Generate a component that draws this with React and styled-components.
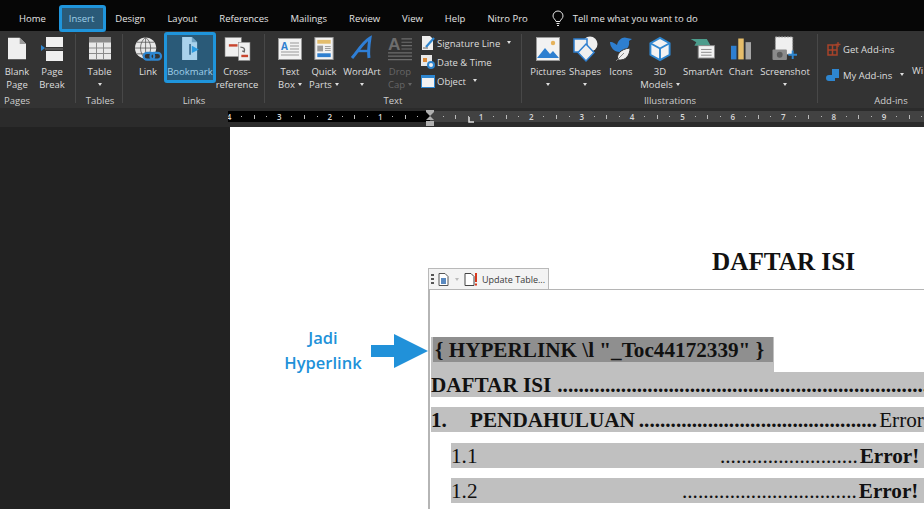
import React from "react";
import styled, { createGlobalStyle } from "styled-components";

const Global = createGlobalStyle`
  html, body { margin: 0; padding: 0; background: #222; }
  #root { width: 924px; height: 509px; overflow: hidden; }
`;

/* ---------- icons ---------- */
const Svg = ({ w = 30, h = 30, vb, children }) => (
  <svg width={w} height={h} viewBox={vb || `0 0 ${w} ${h}`} style={{ display: "block", overflow: "visible" }}>{children}</svg>
);

const BlankPageIcon = () => (
  <Svg w={18} h={23} vb="2 1 20 24">
    <path d="M2 1h13l7 7v17H2z" fill="#efefef" />
    <path d="M15 1v7h7z" fill="#9a9a9a" />
  </Svg>
);
const PageBreakIcon = () => (
  <Svg w={22} h={24} vb="0 1 22 24">
    <rect x="5" y="1" width="17" height="10" fill="#efefef" />
    <rect x="5" y="15" width="17" height="10" fill="#efefef" />
    <path d="M0 9l4 3-4 3z" fill="#2e86d0" />
    <path d="M4 13h18" stroke="#777" />
  </Svg>
);
const TableIcon = () => (
  <Svg w={24} h={23} vb="0.5 0.5 23 23">
    <rect x="1" y="1" width="22" height="22" fill="#e8e8e8" />
    <rect x="1" y="1" width="22" height="5" fill="#8a8a8a" />
    <path d="M8.5 6v17M15.5 6v17M1 11.5h22M1 17h22" stroke="#8a8a8a" />
  </Svg>
);
const LinkIcon = () => (
  <Svg w={28} h={26} vb="0 0 29 26">
    <circle cx="12" cy="12" r="11" fill="#e8e8e8" />
    <path d="M12 1v22M1 12h22M3 6h18M3 18h18M12 1c-7 5-7 17 0 22M12 1c7 5 7 17 0 22" fill="none" stroke="#555" strokeWidth=".8" />
    <rect x="10" y="17" width="11" height="7" rx="3.5" fill="#333" stroke="#2e86d0" strokeWidth="2.2" />
    <rect x="17" y="17" width="11" height="7" rx="3.5" fill="none" stroke="#2e86d0" strokeWidth="2.2" />
  </Svg>
);
const BookmarkIcon = () => (
  <Svg w={19} h={23} vb="3 0 19 26">
    <path d="M3 0h11l6 6v20H3z" fill="#a9d2ec" />
    <path d="M14 0v6h6z" fill="#6ea2c4" />
    <path d="M11 8h2v12h-2z" fill="#3d6f92" />
    <path d="M14 10l8 4-8 4z" fill="#2b9be0" />
  </Svg>
);
const CrossRefIcon = () => (
  <Svg w={27} h={24} vb="0.5 0.5 27 25">
    <rect x="1" y="1" width="17" height="20" fill="#efefef" stroke="#888" strokeWidth=".6" />
    <rect x="15" y="6" width="12" height="19" fill="#efefef" stroke="#888" strokeWidth=".6" />
    <rect x="5" y="8" width="9" height="2.5" fill="#c8452e" />
    <rect x="18" y="19" width="7" height="2.5" fill="#c8452e" />
    <path d="M17 11c4 0 5 2 4 5l-2-1" fill="none" stroke="#666" strokeWidth="1.4" />
  </Svg>
);
const TextBoxIcon = () => (
  <Svg w={24} h={22}>
    <rect x=".5" y=".5" width="23" height="21" fill="#f2f2f2" stroke="#999" />
    <text x="3" y="12" fontFamily="'Open Sans', sans-serif" fontSize="10" fontWeight="700" fill="#2e7fd0">A</text>
    <path d="M12 5h9M12 8h9M12 11h9M3 14h18M3 17h18" stroke="#999" />
  </Svg>
);
const QuickPartsIcon = () => (
  <Svg w={20} h={23} vb="0 0 20 24">
    <rect x=".5" y=".5" width="19" height="23" fill="#f2f2f2" stroke="#999" />
    <rect x="3" y="3" width="14" height="4" fill="#e3bd6d" />
    <rect x="3" y="9" width="6" height="6" fill="#9a9a9a" />
    <path d="M11 10h6M11 12h6M11 14h6" stroke="#999" />
    <rect x="3" y="17" width="14" height="4" fill="#2e7fd0" />
  </Svg>
);
const WordArtIcon = () => (
  <Svg w={22} h={23} vb="1 1 22 23">
    <path d="M2 22C8 15 13 6 20 2c-1 6-2 13-1 20" fill="none" stroke="#2f7fd6" strokeWidth="3" />
    <path d="M7 15h12" stroke="#2f7fd6" strokeWidth="2.4" />
  </Svg>
);
const DropCapIcon = () => (
  <Svg w={24} h={24} vb="0 0 25 25">
    <text x="0" y="14" fontFamily="'Liberation Sans', sans-serif" fontSize="18" fontWeight="700" fill="#6d6d6d">A</text>
    <path d="M14 2h11M14 5.500h11M14 9h11M14 12.500h11M0 16.500h25M0 20h25M0 23.500h25" stroke="#6d6d6d" strokeWidth="1.2" />
  </Svg>
);
const SignatureIcon = () => (
  <Svg w={14} h={14}>
    <path d="M1 0h8l3 3v11H1z" fill="#efefef" />
    <path d="M5 11L13 2" stroke="#2e86d0" strokeWidth="2.2" />
    <path d="M2 12h5" stroke="#666" />
  </Svg>
);
const DateIcon = () => (
  <Svg w={14} h={14}>
    <rect x="0" y="0" width="11" height="11" fill="#e8e8e8" />
    <rect x="2" y="3" width="4" height="4" fill="#d98a3a" />
    <circle cx="10" cy="10" r="4" fill="#2e86d0" />
    <circle cx="10" cy="10" r="2" fill="#efefef" />
  </Svg>
);
const ObjectIcon = () => (
  <Svg w={14} h={13}>
    <rect x=".5" y=".5" width="13" height="12" fill="#f2f2f2" stroke="#2e86d0" />
    <rect x="0" y="0" width="14" height="3" fill="#2e86d0" />
  </Svg>
);
const PicturesIcon = () => (
  <Svg w={24} h={24}>
    <rect x=".5" y=".5" width="23" height="23" fill="#f2f2f2" stroke="#999" />
    <circle cx="17" cy="6" r="2.200" fill="#e6b35c" />
    <path d="M1 21l8-10 5 6 3-3 6 7z" fill="#2e7fd0" />
  </Svg>
);
const ShapesIcon = () => (
  <Svg w={25} h={25}>
    <circle cx="17" cy="8" r="7.500" fill="#efefef" />
    <path d="M1 3h13v13H1z" fill="#efefef" stroke="#2e7fd0" strokeWidth="1.500" />
    <path d="M13 8l8 8.500-8 8.500-8-8.500z" fill="#efefef" stroke="#2e7fd0" strokeWidth="1.500" />
  </Svg>
);
const IconsIcon = () => (
  <Svg w={25} h={25}>
    <path d="M1 6c4 0 5 2 7 3 1-5 6-9 10-7l5 1-3 2c1 6-3 11-9 11C5 16 1 11 1 6z" fill="#2e7fd0" />
    <path d="M9 24c-2-5 2-11 12-12 0 7-4 13-12 12z" fill="#efefef" stroke="#333" />
    <path d="M7 25l8-8" stroke="#888" />
  </Svg>
);
const CubeIcon = () => (
  <Svg w={22} h={24} vb="1 0 22 25">
    <path d="M12 1l10 5.500v12L12 24 2 18.500v-12z" fill="#f2f2f2" stroke="#2e86d0" strokeWidth="2" />
    <path d="M2 6.500l10 5.500 10-5.500M12 12v12" fill="none" stroke="#2e86d0" strokeWidth="2" />
  </Svg>
);
const SmartArtIcon = () => (
  <Svg w={26} h={21} vb="0 0 26 22">
    <path d="M0 1h17l4 7H4l2-3.500z" fill="#4c9c8c" />
    <rect x="8" y="8" width="17" height="13" fill="#f2f2f2" stroke="#888" />
    <path d="M11 12h11M11 15h11M11 18h11" stroke="#888" />
  </Svg>
);
const ChartIcon = () => (
  <Svg w={20} h={23} vb="0 0 22 24">
    <rect x="0" y="9" width="6" height="15" fill="#2e7fd0" />
    <rect x="8" y="1" width="6" height="23" fill="#e6bd6a" />
    <rect x="16" y="5" width="6" height="19" fill="#a6a6a6" />
  </Svg>
);
const ScreenshotIcon = () => (
  <Svg w={26} h={25} vb="0 0 26 26">
    <rect x="3" y="1" width="18" height="18" fill="#efefef" stroke="#999" strokeDasharray="2 1" />
    <rect x="0" y="14" width="15" height="11" rx="1" fill="#8b8b8b" />
    <circle cx="7.500" cy="19.500" r="3" fill="#5b5b5b" />
    <path d="M21 15v9M16.500 19.500h9" stroke="#2e86d0" strokeWidth="2" />
  </Svg>
);
const GetAddinsIcon = () => (
  <Svg w={14} h={14}>
    <path d="M1 3h9v10H1zM1 8h9M5.500 3v10" fill="none" stroke="#a8432a" strokeWidth="1.500" />
    <path d="M11 0v5M8.500 2.500h5" stroke="#a8432a" strokeWidth="1.300" />
  </Svg>
);
const MyAddinsIcon = () => (
  <Svg w={12} h={12}>
    <path d="M5 0h7v9H8v3H2a2 2 0 0 1 0-6h3z" fill="#2e86d0" />
  </Svg>
);
const BulbIcon = () => (
  <Svg w={12} h={15}>
    <path d="M4 10.500C3.500 8.500 1 7.500 1 5a5 5 0 0 1 10 0c0 2.500-2.500 3.500-3 5.500z" fill="none" stroke="#e6e6e6" />
    <path d="M4.500 12.500h3M5 14.500h2" stroke="#e6e6e6" />
  </Svg>
);
const DocChipIcon = () => (
  <Svg w={11} h={13}>
    <path d="M1 .5h6l3 3v9H1z" fill="#fff" stroke="#555" />
    <rect x="3" y="5" width="5" height="6" fill="#5b8ac0" />
  </Svg>
);
const UpdateIcon = () => (
  <Svg w={14} h={13}>
    <path d="M1 .5h6l3 3v9H1z" fill="#fff" stroke="#444" />
    <path d="M12 0v9" stroke="#d8371c" strokeWidth="2" />
    <path d="M12 10.500v2" stroke="#d8371c" strokeWidth="2" />
  </Svg>
);

/* ---------- tab bar ---------- */
const TabBar = styled.div`
  position: relative;
  z-index: 1;
  height: 31px;
  background: #060606;
  display: flex;
  align-items: flex-start;
  padding: 5px 0 0 8px;
  box-sizing: border-box;
  font-family: "Open Sans", sans-serif;
  font-size: 9.5px;
  color: #e4e4e4;
`;
const Tab = styled.div`
  box-sizing: border-box;
  height: 27px;
  line-height: 27px;
  padding: 0 11px;
  ${(p) => p.$active && `
    width: 47px;
    margin: 0 -2px 0 2.400px;
    padding: 0 6.500px;
    border: 3px solid #1f95dc;
    border-radius: 3px;
    background: #2a5a78;
    color: #9fd0ea;
    line-height: 21px;
  `}
`;
const TellMe = styled.div`
  display: flex;
  align-items: center;
  gap: 9px;
  height: 27px;
  margin-left: 13px;
  box-sizing: border-box;
`;

/* ---------- ribbon ---------- */
const Ribbon = styled.div`
  height: 77px;
  background: #333333;
  display: flex;
  font-family: "Open Sans", sans-serif;
  font-size: 9.5px;
  color: #dedede;
  overflow: hidden;
`;
const Group = styled.div`
  position: relative;
  box-sizing: border-box;
  flex: none;
  width: ${(p) => p.$w}px;
  padding: 1px 0 0 ${(p) => p.$pad || 0}px;
  display: flex;
  align-items: flex-start;
  &::after {
    content: "";
    position: absolute;
    right: 0;
    top: 3px;
    bottom: 5px;
    width: 1px;
    background: ${(p) => (p.$last ? "transparent" : "#484848")};
  }
`;
const GroupLabel = styled.div`
  position: absolute;
  left: ${(p) => p.$x}px;
  bottom: 1px;
  transform: translateX(-50%);
  line-height: 13px;
  color: #cfcfcf;
  white-space: nowrap;
`;
const Item = styled.div`
  box-sizing: border-box;
  flex: none;
  width: ${(p) => p.$w}px;
  height: 51px;
  display: flex;
  flex-direction: column;
  align-items: center;
  text-align: center;
  line-height: 13px;
  white-space: nowrap;
  color: ${(p) => (p.$off ? "#666" : "inherit")};
  ${(p) => p.$active && `
    border: 3px solid #1f95dc;
    border-radius: 3px;
    background: #2a5a78;
    color: #9fd0ea;
  `}
`;
const IconSlot = styled.div`
  height: 31px;
  flex: none;
  display: flex;
  align-items: center;
  justify-content: center;
  margin-top: ${(p) => (p.$active ? "-2px" : "1px")};
  margin-bottom: 1px;
`;
const Caret = styled.span`
  display: inline-block;
  width: 0;
  height: 0;
  margin: 0 0 2px 3px;
  vertical-align: middle;
  border: 2.5px solid transparent;
  border-bottom: 0;
  border-top: 3px solid ${(p) => (p.$off ? "#666" : "#dedede")};
`;
const SmallList = styled.div`
  display: flex;
  flex-direction: column;
  gap: 3px;
  margin: 3px 0 0 4px;
`;
const SmallRow = styled.div`
  display: flex;
  align-items: center;
  gap: ${(p) => p.$gap || 2}px;
  height: 16px;
  white-space: nowrap;
`;
const AddinsList = styled.div`
  display: flex;
  flex-direction: column;
  gap: 10px;
  margin: 9px 0 0 9px;
`;
const WebCut = styled.div`
  position: absolute;
  left: 94px;
  top: 33px;
`;

const RibbonItem = ({ w, icon, lines, caret, off, active }) => (
  <Item $w={w} $off={off} $active={active}>
    <IconSlot $active={active}>{icon}</IconSlot>
    {lines.map((l, i) => (
      <div key={l}>
        {l}
        {caret === "inline" && i === lines.length - 1 && <Caret $off={off} />}
      </div>
    ))}
    {caret === "below" && <div><Caret $off={off} style={{ marginLeft: 0 }} /></div>}
  </Item>
);

/* ---------- ruler ---------- */
const RulerRow = styled.div`
  position: relative;
  height: 19px;
  background: #2b2b2b;
  padding: 3px 0 5px 228px;
  box-sizing: border-box;
`;
const RulerStrip = styled.div`
  height: 11px;
  overflow: hidden;
  display: flex;
  background: linear-gradient(to right, #000 202px, #424242 202px);
  font-family: "Open Sans", sans-serif;
  font-size: 8px;
  font-weight: 600;
  line-height: 10px;
  color: #d8d8d8;
`;
const RulerInch = styled.div`
  flex: none;
  width: 50.4px;
  display: grid;
  grid-template-columns: repeat(4, 1fr);
  text-align: center;
  margin-left: ${(p) => p.$first || 0}px;
  span { display: flex; align-items: center; justify-content: center; }
`;
const Dot = styled.i`
  display: block;
  width: 1px;
  height: 1px;
  background: #bbb;
`;
const Tick = styled.i`
  display: block;
  width: 1px;
  height: 4px;
  background: #bbb;
`;
const IndentMark = styled.div`
  position: absolute;
  left: 426px;
  top: 2px;
`;
const TabStopMark = styled.div`
  position: absolute;
  left: 468px;
  top: 9px;
`;

const Inch = ({ n, first }) => (
  <RulerInch $first={first}>
    <span>{n}</span>
    <span><Dot /></span>
    <span><Tick /></span>
    <span><Dot /></span>
  </RulerInch>
);

/* ---------- document ---------- */
const Workspace = styled.div`
  height: 382px;
  background: #222222;
  padding-left: 230px;
  overflow: hidden;
`;
const Page = styled.div`
  height: 100%;
  background: #fff;
  padding-top: 121px;
  box-sizing: border-box;
  display: flex;
`;
const Callout = styled.div`
  flex: none;
  width: 198px;
  box-sizing: border-box;
  padding: 77px 0 0 53px;
  display: flex;
  align-items: flex-start;
`;
const CalloutText = styled.div`
  width: 80px;
  text-align: center;
  font-family: "Open Sans", sans-serif;
  font-weight: 600;
  font-size: 16.5px;
  line-height: 25px;
  color: #2191d9;
  white-space: nowrap;
`;
const CalloutArrow = styled.div`
  margin: 9px 0 0 8px;
`;
const FieldColumn = styled.div`
  flex: 1;
  min-width: 0;
  font-family: "Liberation Serif", serif;
  color: #111;
`;
const FieldHead = styled.div`
  height: 41px;
  display: flex;
  align-items: flex-end;
`;
const ChipTab = styled.div`
  box-sizing: border-box;
  width: 121px;
  height: 21px;
  display: flex;
  align-items: center;
  gap: 4px;
  padding: 0 2px;
  background: #f3f3f3;
  border: 1.5px solid #b9b9b9;
  border-bottom: 0;
  font-family: "Open Sans", sans-serif;
  font-size: 9px;
  color: #3a3a3a;
  white-space: nowrap;
`;
const Grip = styled.div`
  width: 3px;
  height: 11px;
  background: repeating-linear-gradient(to bottom, #555 0 2px, transparent 2px 4px);
`;
const ChipCaret = styled.span`
  width: 0;
  height: 0;
  margin: 0 1px 0 2px;
  border: 2.5px solid transparent;
  border-bottom: 0;
  border-top: 3px solid #bbb;
`;
const DocTitle = styled.h1`
  margin: 0 0 14px 163px;
  font-size: 25.2px;
  line-height: 27px;
  font-weight: 700;
  white-space: nowrap;
`;
const FieldBox = styled.div`
  box-sizing: border-box;
  height: 220px;
  border-top: 1.5px solid #b5b5b5;
  border-left: 2px solid #b5b5b5;
  padding: 46.500px 0 0 1px;
  font-size: 21.2px;
`;
const CodeRow = styled.div`
  width: 343px;
  height: 35px;
  background: #c0c0c0;
`;
const CodeText = styled.div`
  display: inline-block;
  height: 25px;
  line-height: 26px;
  margin-left: 2px;
  padding-left: 2px;
  padding-right: 9px;
  background: #8f8f8f;
  font-weight: 700;
  white-space: nowrap;
`;
const TocRow = styled.div`
  display: flex;
  height: 25px;
  line-height: 26px;
  margin: 0 0 ${(p) => p.$gap || 0}px ${(p) => p.$indent || 0}px;
  background: #c0c0c0;
  white-space: nowrap;
  overflow: hidden;
`;
const TocLabel = styled.span`
  flex: none;
  width: ${(p) => (p.$w ? `${p.$w}px` : "auto")};
  font-weight: ${(p) => (p.$bold ? 700 : 400)};
  box-sizing: border-box;
`;
const Leader = styled.span`
  flex: none;
  margin-left: ${(p) => p.$gap || 0}px;
  font-weight: ${(p) => (p.$bold ? 700 : 400)};
`;
const PageRef = styled.span`
  flex: none;
  margin-left: 2px;
  font-weight: ${(p) => (p.$bold ? 700 : 400)};
`;

const dots = (n) => ".".repeat(n);

export default function App() {
  return (
    <>
      <Global />
      <TabBar>
        <Tab>Home</Tab>
        <Tab $active>Insert</Tab>
        <Tab>Design</Tab>
        <Tab>Layout</Tab>
        <Tab>References</Tab>
        <Tab>Mailings</Tab>
        <Tab>Review</Tab>
        <Tab>View</Tab>
        <Tab>Help</Tab>
        <Tab>Nitro Pro</Tab>
        <TellMe><BulbIcon />Tell me what you want to do</TellMe>
      </TabBar>

      <Ribbon>
        <Group $w={76}>
          <RibbonItem w={34} icon={<BlankPageIcon />} lines={["Blank", "Page"]} />
          <RibbonItem w={36} icon={<PageBreakIcon />} lines={["Page", "Break"]} />
          <GroupLabel $x={17}>Pages</GroupLabel>
        </Group>
        <Group $w={47}>
          <RibbonItem w={47} icon={<TableIcon />} lines={["Table"]} caret="below" />
          <GroupLabel $x={24}>Tables</GroupLabel>
        </Group>
        <Group $w={142} $pad={9}>
          <RibbonItem w={32} icon={<LinkIcon />} lines={["Link"]} />
          <RibbonItem w={52} icon={<BookmarkIcon />} lines={["Bookmark"]} active />
          <RibbonItem w={42} icon={<CrossRefIcon />} lines={["Cross-", "reference"]} />
          <GroupLabel $x={71}>Links</GroupLabel>
        </Group>
        <Group $w={257} $pad={8}>
          <RibbonItem w={34} icon={<TextBoxIcon />} lines={["Text", "Box"]} caret="inline" />
          <RibbonItem w={34} icon={<QuickPartsIcon />} lines={["Quick", "Parts"]} caret="inline" />
          <RibbonItem w={42} icon={<WordArtIcon />} lines={["WordArt"]} caret="below" />
          <RibbonItem w={34} icon={<DropCapIcon />} lines={["Drop", "Cap"]} caret="inline" off />
          <SmallList>
            <SmallRow><SignatureIcon />Signature Line<Caret style={{ marginLeft: 5 }} /></SmallRow>
            <SmallRow><DateIcon />Date &amp; Time</SmallRow>
            <SmallRow><ObjectIcon />Object<Caret style={{ marginLeft: 5 }} /></SmallRow>
          </SmallList>
          <GroupLabel $x={128}>Text</GroupLabel>
        </Group>
        <Group $w={296} $pad={8}>
          <RibbonItem w={36} icon={<PicturesIcon />} lines={["Pictures"]} caret="below" />
          <RibbonItem w={38} icon={<ShapesIcon />} lines={["Shapes"]} caret="below" />
          <RibbonItem w={34} icon={<IconsIcon />} lines={["Icons"]} />
          <RibbonItem w={44} icon={<CubeIcon />} lines={["3D", "Models"]} caret="inline" />
          <RibbonItem w={42} icon={<SmartArtIcon />} lines={["SmartArt"]} />
          <RibbonItem w={34} icon={<ChartIcon />} lines={["Chart"]} />
          <RibbonItem w={54} icon={<ScreenshotIcon />} lines={["Screenshot"]} caret="below" />
          <GroupLabel $x={148}>Illustrations</GroupLabel>
        </Group>
        <Group $w={106} $last>
          <AddinsList>
            <SmallRow><GetAddinsIcon />Get Add-ins</SmallRow>
            <SmallRow $gap={4}><MyAddinsIcon />My Add-ins<Caret style={{ marginLeft: 4 }} /></SmallRow>
          </AddinsList>
          <WebCut>Wi</WebCut>
          <GroupLabel $x={73}>Add-ins</GroupLabel>
        </Group>
      </Ribbon>

      <RulerRow>
        <RulerStrip>
          <Inch n="4" first={-5.300} />
          <Inch n="3" />
          <Inch n="2" />
          <Inch n="1" />
          <Inch n="" />
          <Inch n="1" />
          <Inch n="2" />
          <Inch n="3" />
          <Inch n="4" />
          <Inch n="5" />
          <Inch n="6" />
          <Inch n="7" />
          <Inch n="8" />
          <Inch n="9" />
        </RulerStrip>
        <IndentMark>
          <svg width="8" height="16" viewBox="0 0 8 16" style={{ display: "block" }}>
            <path d="M0 0h8v2L4 6 0 2z" fill="#b0b0b0" />
            <path d="M4 6l4 4H0z" fill="#b0b0b0" />
            <rect y="11" width="8" height="5" fill="#b0b0b0" />
          </svg>
        </IndentMark>
        <TabStopMark>
          <svg width="6" height="6" viewBox="0 0 6 6" style={{ display: "block" }}>
            <path d="M1 0v5h5" fill="none" stroke="#ddd" strokeWidth="1.500" />
          </svg>
        </TabStopMark>
      </RulerRow>

      <Workspace>
        <Page>
          <Callout>
            <CalloutText>Jadi<br />Hyperlink</CalloutText>
            <CalloutArrow>
              <svg width="57" height="34" viewBox="0 0 57 34" style={{ display: "block" }}>
                <path d="M0 11h23V0l34 17-34 17V23H0z" fill="#2191d9" />
              </svg>
            </CalloutArrow>
          </Callout>
          <FieldColumn>
            <FieldHead>
              <ChipTab>
                <Grip />
                <DocChipIcon />
                <ChipCaret />
                <UpdateIcon />
                Update Table...
              </ChipTab>
              <DocTitle>DAFTAR ISI</DocTitle>
            </FieldHead>
            <FieldBox>
              <CodeRow>
                <CodeText>{'{ HYPERLINK \\l "_Toc44172339" }'}</CodeText>
              </CodeRow>
              <TocRow $gap={10}>
                <TocLabel $bold>DAFTAR ISI</TocLabel>
                <Leader $bold $gap={6}>{dots(70)}</Leader>
              </TocRow>
              <TocRow $gap={11}>
                <TocLabel $bold $w={39}>1.</TocLabel>
                <TocLabel $bold>PENDAHULUAN</TocLabel>
                <Leader $bold $gap={4}>{dots(45)}</Leader>
                <PageRef>Error</PageRef>
              </TocRow>
              <TocRow $indent={20} $gap={10}>
                <TocLabel $w={269}>1.1</TocLabel>
                <Leader>{dots(26)}</Leader>
                <PageRef $bold>Error!</PageRef>
              </TocRow>
              <TocRow $indent={20}>
                <TocLabel $w={231}>1.2</TocLabel>
                <Leader>{dots(33)}</Leader>
                <PageRef $bold>Error!</PageRef>
              </TocRow>
            </FieldBox>
          </FieldColumn>
        </Page>
      </Workspace>
    </>
  );
}
